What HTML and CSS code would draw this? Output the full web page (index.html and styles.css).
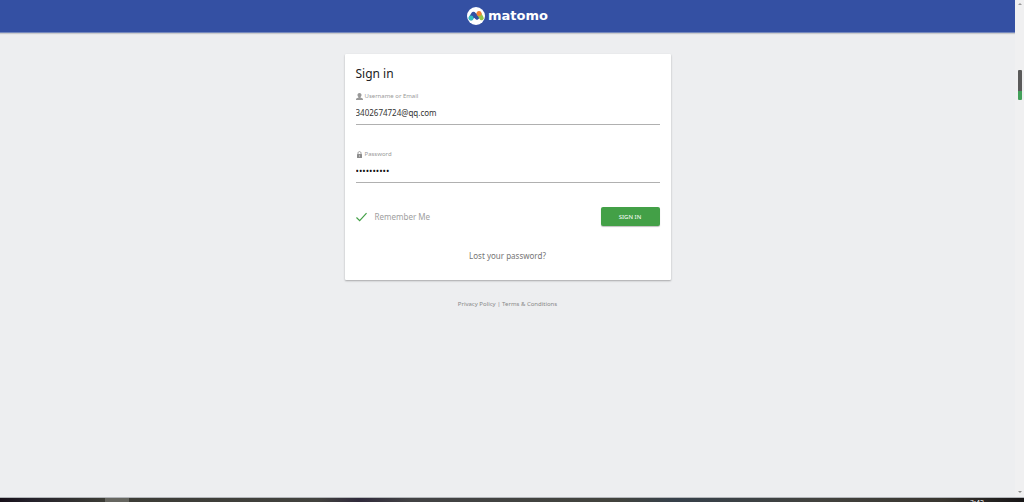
FILE: index.html
```html
<!DOCTYPE html>
<html lang="en">
<head>
    <meta charset="UTF-8">
    <meta name="viewport" content="width=device-width, initial-scale=1.0">
    <title>Sign in - Matomo</title>
    <link rel="stylesheet" href="styles.css">
</head>
<body>
    <div class="window">
        <div class="page">
            <header class="navbar">
                <a class="logo" href="#">
                    <svg class="logo-mark" viewBox="0 0 36 36" aria-hidden="true">
                        <circle cx="18" cy="18" r="18" fill="#fff"/>
                        <path d="M8 22L13 14L20 21L24 14" fill="none" stroke="#3450a3" stroke-width="9" stroke-linecap="round" stroke-linejoin="round"/>
                        <path d="M25 15L29 22" stroke="#95c748" stroke-width="9" stroke-linecap="round"/>
                        <circle cx="8" cy="22" r="5" fill="#35bfc0"/>
                        <circle cx="24" cy="13" r="5" fill="#f38334"/>
                    </svg>
                    <span>matomo</span>
                </a>
            </header>

            <main class="login">
                <form class="card">
                    <h1>Sign in</h1>

                    <div class="field">
                        <label for="login">
                            <svg class="icon" viewBox="0 0 14 14" aria-hidden="true">
                                <path d="M7 0C4 0 3 2 3 4C3 6 4 7.500 5 8V9L1.500 10.500C.4 11 0 12 0 14H14C14 12 13.600 11 12.500 10.500L9 9V8C10 7.500 11 6 11 4C11 2 10 0 7 0Z" fill="#999"/>
                            </svg>
                            Username or Email
                        </label>
                        <input type="text" id="login" value="3402674724@qq.com">
                    </div>

                    <div class="field">
                        <label for="password">
                            <svg class="icon" viewBox="0 0 14 14" aria-hidden="true">
                                <path d="M4 7V4.500C4 0 10 0 10 4.500V7" fill="none" stroke="#999" stroke-width="2"/>
                                <rect x="2" y="6" width="10" height="8" rx="1" fill="#8c8c8c"/>
                                <path d="M7 8.500V11.500" stroke="#ddd" stroke-width="1.500"/>
                            </svg>
                            Password
                        </label>
                        <input type="password" id="password" value="abcdefghij">
                    </div>

                    <div class="actions">
                        <label class="remember">
                            <input type="checkbox" checked>
                            <svg class="check" viewBox="0 0 12 10" aria-hidden="true">
                                <path d="M.5 5.500L4 9L11.500 .8" fill="none" stroke="#43a047" stroke-width="1.300"/>
                            </svg>
                            Remember Me
                        </label>
                        <button type="submit">SIGN IN</button>
                    </div>

                    <a class="lost" href="#">Lost your password?</a>
                </form>

                <p class="legal">
                    <a href="#">Privacy Policy</a> | <a href="#">Terms &amp; Conditions</a>
                </p>
            </main>
        </div>

        <div class="scrollbar">
            <span class="arrow up"></span>
            <span class="thumb"></span>
            <span class="arrow down"></span>
        </div>
    </div>

    <div class="taskbar">
        <span class="task"></span>
        <span class="clock">3:42</span>
    </div>
</body>
</html>
```
FILE: styles.css
```css
* {
    box-sizing: border-box;
}
body {
    margin: 0;
    height: 100vh;
    display: flex;
    flex-direction: column;
    overflow: hidden;
    background: #edeef0;
    font-family: "Noto Sans", "Open Sans", sans-serif;
    font-size: 8px;
    color: #212121;
}
a {
    color: inherit;
    text-decoration: none;
}
.window {
    flex: 1;
    min-height: 0;
    display: flex;
}
.page {
    flex: 1;
}

/* top bar */
.navbar {
    height: 33px;
    display: flex;
    align-items: center;
    justify-content: center;
    background: #3450a3;
    border-bottom: 1px solid #7588bd;
    box-shadow: 0 1px 1px rgba(0,0,0,0.15);
}
.logo {
    display: flex;
    align-items: center;
    gap: 3px;
    color: white;
    font-family: "DejaVu Sans", sans-serif;
    font-size: 13px;
    font-weight: bold;
    line-height: 16px;
}
.logo-mark {
    width: 18px;
    height: 18px;
}

/* login form */
.login {
    padding: 21px 16px 0;
}
.card {
    max-width: 326px;
    margin: 0 auto;
    padding: 11px 11px 18px;
    display: flex;
    flex-direction: column;
    background: white;
    border-radius: 1px;
    box-shadow: 0 1px 2px rgba(0,0,0,0.3);
}
h1 {
    margin: 0 0 8px;
    font-size: 12px;
    font-weight: normal;
    line-height: 18px;
}
.field {
    margin-bottom: 24px;
}
.field label {
    display: flex;
    align-items: center;
    gap: 2px;
    height: 10px;
    font-size: 6px;
    color: #999;
}
.icon {
    width: 7px;
    height: 7px;
}
.field input {
    display: block;
    width: 100%;
    height: 24px;
    padding: 0;
    border: 0;
    border-bottom: 1px solid #b0b0b0;
    outline: none;
    background: transparent;
    font: inherit;
    color: #333;
}
.field input[type="password"] {
    font-size: 9px;
    color: #111;
}
.actions {
    display: flex;
    align-items: center;
    justify-content: space-between;
}
.remember {
    display: flex;
    align-items: center;
    gap: 8px;
    color: #9e9e9e;
}
.remember input {
    position: absolute;
    opacity: 0;
}
.check {
    width: 11px;
    height: 10px;
}
button {
    width: 59px;
    height: 19px;
    padding: 0;
    border: 0;
    border-radius: 2px;
    background: #43a047;
    box-shadow: 0 1px 1px rgba(0,0,0,0.25);
    font-family: inherit;
    font-size: 6px;
    color: white;
    cursor: pointer;
}
.lost {
    align-self: center;
    margin-top: 24px;
    line-height: 12px;
    color: #757575;
}
.legal {
    margin: 19px 0 0;
    font-size: 6px;
    line-height: 10px;
    text-align: center;
    color: #888;
}

/* scrollbar */
.scrollbar {
    width: 9px;
    padding: 3px 0 4px;
    display: flex;
    flex-direction: column;
    align-items: center;
    background: #f0f0f1;
}
.arrow {
    border: 2px solid transparent;
}
.up {
    border-top: 0;
    border-bottom-color: #999;
}
.down {
    margin-top: auto;
    border-bottom: 0;
    border-top-color: #888;
}
.thumb {
    width: 4px;
    height: 30px;
    margin-top: 65px;
    border-radius: 1px;
    background: linear-gradient(#5a5a5a 70%, #43a05a 70%);
}

/* system taskbar */
.taskbar {
    height: 5px;
    display: flex;
    overflow: hidden;
    border-top: 1px solid #b3b6ba;
    background: linear-gradient(90deg, #171019, #24212a 3%, #3b3b35 10%, #42423e 31%, #302a3b 35%, #424244 40%, #42433d 60%, #36404a 66%, #42423e 80%, #393630 92%, #171516);
}
.task {
    width: 24px;
    margin-left: 105px;
    background: #666660;
}
.clock {
    margin: 2px 40px 0 auto;
    font-size: 7px;
    line-height: 6px;
    color: white;
}
```
